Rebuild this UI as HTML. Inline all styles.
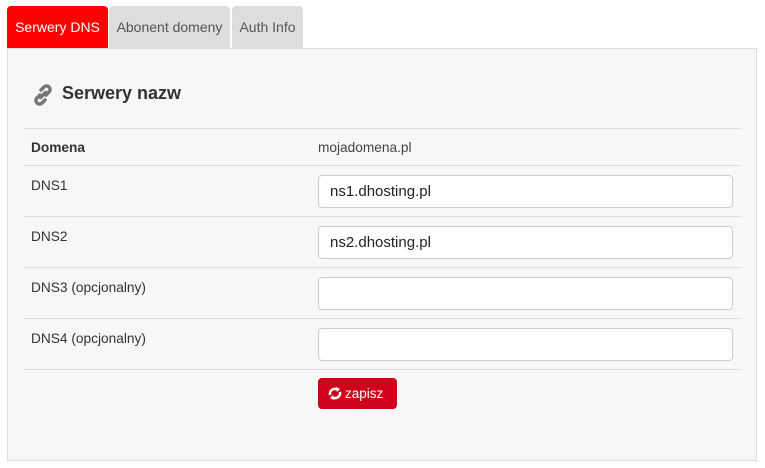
<!DOCTYPE html>
<html><head><style>
body{margin:0;background:#fff;font-family:"Liberation Sans",sans-serif;width:765px;height:468px;position:relative;overflow:hidden}
.tab{position:absolute;top:6px;height:42px;line-height:42px;font-size:14px;color:#555;background:#ddd;border-radius:4px 4px 0 0;text-align:center}
.panel{position:absolute;left:7px;top:48px;width:750px;height:413px;background:#f7f7f7;border:1px solid #ddd;box-sizing:border-box}
.line{position:absolute;left:24px;width:717px;height:1px;background:#ddd}
.lbl{position:absolute;left:31px;font-size:13.7px;color:#333}
.inp{position:absolute;left:318px;width:415px;height:33px;background:#fff;border:1px solid #ccc;border-radius:4px;box-sizing:border-box;font-size:15px;color:#222;padding-left:11px;line-height:31px}
</style></head><body>
<div class="panel"></div>
<div class="tab" style="left:7px;width:101px;background:#f00;color:#fff">Serwery DNS</div>
<div class="tab" style="left:109px;width:121px">Abonent domeny</div>
<div class="tab" style="left:232px;width:71px">Auth Info</div>
<svg style="position:absolute;left:31px;top:83px" width="24" height="24" viewBox="0 0 24 24"><g fill="none" stroke="#777" stroke-width="3.5" stroke-linecap="round"><path d="M10 7l3-3a3.5 3.5 0 015 5l-3 3"/><path d="M14 17l-3 3a3.5 3.5 0 01-5-5l3-3"/><path d="M9.5 14.5l5-5"/></g></svg>
<div style="position:absolute;left:62px;top:83px;font-size:18px;font-weight:bold;color:#333">Serwery nazw</div>
<div class="line" style="top:128px"></div>
<div class="line" style="top:165px"></div>
<div class="line" style="top:216px"></div>
<div class="line" style="top:267px"></div>
<div class="line" style="top:318px"></div>
<div class="line" style="top:369px"></div>
<div class="lbl" style="top:140px;font-weight:bold">Domena</div>
<div style="position:absolute;left:318px;top:140px;font-size:13.7px;color:#444">mojadomena.pl</div>
<div class="lbl" style="top:178px">DNS1</div>
<div class="lbl" style="top:229px">DNS2</div>
<div class="lbl" style="top:280px">DNS3 (opcjonalny)</div>
<div class="lbl" style="top:331px">DNS4 (opcjonalny)</div>
<div class="inp" style="top:175px">ns1.dhosting.pl</div>
<div class="inp" style="top:226px">ns2.dhosting.pl</div>
<div class="inp" style="top:277px"></div>
<div class="inp" style="top:328px"></div>
<div style="position:absolute;left:318px;top:378px;width:79px;height:31px;background:#d0021b;border-radius:4px;color:#fff;font-size:13.5px;line-height:31px;box-sizing:border-box;padding-left:27px">zapisz
<svg style="position:absolute;left:10px;top:8px" width="14" height="15" viewBox="0 0 14 15"><g fill="none" stroke="#fff" stroke-width="2.5"><path d="M2 9a5 5 0 018-5"/><path d="M12 6a5 5 0 01-8 5"/></g><path d="M8 1l4 2-3 3z M6 14l-4-2 3-3z" fill="#fff"/></svg></div>
</body></html>
